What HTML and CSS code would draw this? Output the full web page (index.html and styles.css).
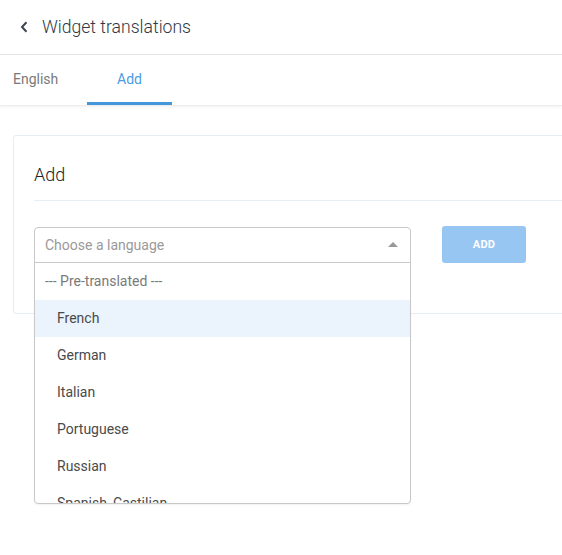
FILE: index.html
```html
<!DOCTYPE html>
<html>
<head>
<meta charset="utf-8">
<link rel="stylesheet" href="styles.css">
</head>
<body>
<header class="topbar">
  <svg class="back" width="8" height="12" viewBox="0 0 8 12"><path d="M6.5 1.2 L2 6 L6.5 10.8" fill="none" stroke="#3c4450" stroke-width="2"/></svg>
  <h1 class="title">Widget translations</h1>
</header>
<nav class="tabs">
  <div class="tab tab-english">English</div>
  <div class="tab tab-add active">Add</div>
</nav>
<main class="content">
  <section class="card">
    <h2 class="card-title">Add</h2>
    <div class="divider"></div>
    <div class="form-row">
      <div class="select-wrap">
        <div class="select">
          <span class="placeholder">Choose a language</span>
          <span class="caret"></span>
        </div>
        <ul class="dropdown">
          <li class="group">--- Pre-translated ---</li>
          <li class="option hl">French</li>
          <li class="option">German</li>
          <li class="option">Italian</li>
          <li class="option">Portuguese</li>
          <li class="option">Russian</li>
          <li class="option">Spanish, Castilian</li>
        </ul>
      </div>
      <button class="btn">ADD</button>
    </div>
  </section>
</main>
</body>
</html>
```
FILE: styles.css
```css
* { box-sizing: border-box; }
html, body { margin: 0; padding: 0; background: #fff; overflow: hidden; }
body { font-family: Roboto, "Liberation Sans", sans-serif; width: 562px; height: 555px; overflow: hidden; }

.topbar {
  height: 55px;
  border-bottom: 1px solid #e4e4e4;
  display: flex;
  align-items: center;
  padding-left: 20px;
}
.back { display: block; }
.title {
  margin: 0 0 0 14px;
  font-size: 17.6px;
  font-weight: 300;
  color: #2f3744;
}

.tabs {
  height: 51px;
  display: flex;
  border-bottom: 1px solid #ececec;
  box-shadow: 0 1px 3px rgba(0,0,0,0.06);
}
.tab {
  font-size: 14px;
  line-height: 48px;
  color: #7a7a7a;
}
.tab-english { padding-left: 13px; width: 87px; }
.tab-add {
  width: 85px;
  text-align: center;
  color: #4a9de0;
  border-bottom: 3px solid #4496db;
}

.content { padding: 29px 0 0 13px; }
.card {
  position: relative;
  margin-right: -20px;
  height: 179px;
  border: 1px solid #e6ecf3;
  border-radius: 3px;
  padding: 0 0 0 20px;
}
.card-title {
  margin: 0;
  font-size: 18px;
  font-weight: 300;
  color: #222;
  height: 64px;
  line-height: 78px;
}
.divider { height: 1px; background: #e8eef5; }

.form-row { display: flex; align-items: flex-start; margin-top: 26px; }
.select-wrap { position: relative; width: 377px; }
.select {
  height: 36px;
  border: 1px solid #c8c8c8;
  border-radius: 4px 4px 0 0;
  display: flex;
  align-items: center;
  justify-content: space-between;
  padding: 0 12px 0 10px;
}
.placeholder { font-size: 14px; color: #9a9a9a; }
.caret {
  width: 0; height: 0;
  border-left: 5px solid transparent;
  border-right: 5px solid transparent;
  border-bottom: 5px solid #999;
  margin-top: -1px;
}
.dropdown {
  position: absolute;
  left: 0; top: 35px;
  width: 377px;
  height: 242px;
  margin: 0; padding: 0;
  list-style: none;
  background: #fff;
  border: 1px solid #c8c8c8;
  border-radius: 0 0 4px 4px;
  box-shadow: 0 1px 2px rgba(0,0,0,0.06);
  overflow: hidden;
  z-index: 5;
}
.dropdown li {
  height: 37px;
  line-height: 37px;
  font-size: 14px;
  color: #4a4a4a;
}
.dropdown .group { color: #7a7a7a; padding-left: 10px; }
.dropdown .option { padding-left: 22px; }
.dropdown .hl { background: #ebf3fc; }

.btn {
  margin-left: 31px;
  width: 84px;
  height: 37px;
  margin-top: -1px;
  border: 0;
  border-radius: 3px;
  background: #97c6f3;
  color: #fff;
  font-family: Roboto, "Liberation Sans", sans-serif;
  font-size: 11px;
  font-weight: 700;
  letter-spacing: 0.2px;
}
```
